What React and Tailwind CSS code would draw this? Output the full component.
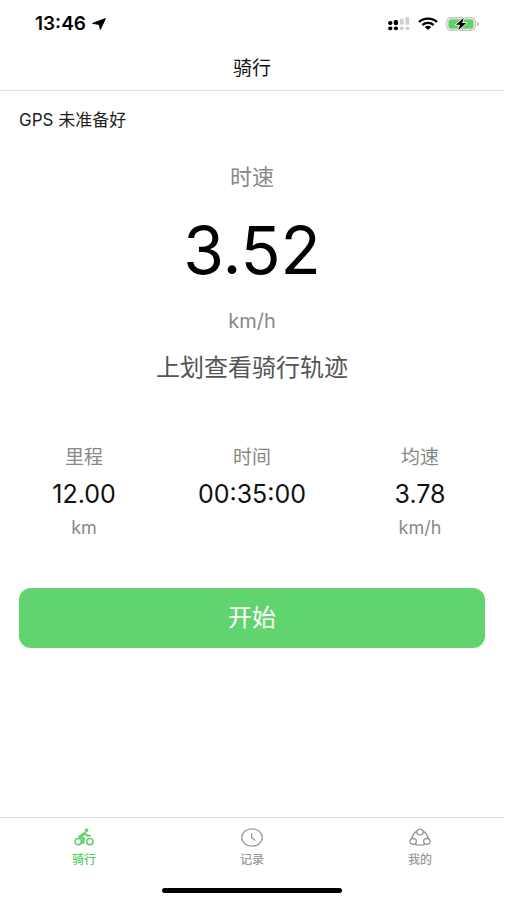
import React, { useState } from 'react';

const StatusBar = () => (
  <div className="flex h-12 items-center justify-between pl-[35px] pr-[25px]">
    <div className="flex items-center gap-[6px] text-[19px] font-semibold text-black">
      <span>13:46</span>
      <svg width="14" height="12" viewBox="0 0 14 12" aria-hidden="true">
        <path d="M13.4 0.6 L8.4 11.4 L7.2 6.4 L0.6 5.4 Z" fill="#000" stroke="#000" strokeWidth="1" strokeLinejoin="round" />
      </svg>
    </div>

    <div className="flex items-center gap-2">
      {/* Dual SIM signal */}
      <svg width="22" height="14" viewBox="0 0 22 14" aria-hidden="true">
        <g fill="#000">
          <rect x="0.2" y="4" width="4.2" height="4" rx="1.8" />
          <rect x="5.8" y="3" width="4.2" height="5" rx="1.6" />
          <rect x="0.2" y="9.4" width="4.2" height="3.8" rx="1.8" />
          <rect x="5.8" y="9.4" width="4.2" height="3.8" rx="1.8" />
        </g>
        <g fill="#cfcfcf">
          <rect x="11.8" y="1.8" width="3.8" height="6" rx="1.2" />
          <rect x="17.4" y="0" width="3.8" height="7.8" rx="1.2" />
          <rect x="11.8" y="9.6" width="3.8" height="3.4" rx="1.6" />
          <rect x="17.4" y="9.6" width="3.8" height="3.4" rx="1.6" />
        </g>
      </svg>
      {/* Wi-Fi */}
      <svg width="20" height="14" viewBox="0 0 20 14" aria-hidden="true">
        <g fill="none" stroke="#000" strokeWidth="2.3">
          <path d="M1 5 C5.8 0.4 14.2 0.4 19 5" />
          <path d="M4.4 8.1 C7.5 5.2 12.5 5.2 15.6 8.1" />
        </g>
        <path d="M6.7 10.1 C8.6 8.4 11.4 8.4 13.3 10.1 L10.8 12.3 Q10 13 9.2 12.3 Z" fill="#000" />
      </svg>
      {/* Battery, charging */}
      <svg width="33" height="14" viewBox="0 0 33 14" aria-hidden="true">
        <rect x="0.7" y="0.7" width="28.6" height="12.6" rx="4" fill="#fff" stroke="#c4c4c4" strokeWidth="1.4" />
        <rect x="2.4" y="2.2" width="25.2" height="9.6" rx="2.2" fill="#62d168" />
        <path d="M30.8 4.8 Q32.8 5.4 32.8 7 Q32.8 8.6 30.8 9.2 Z" fill="#b8b8b8" />
        <path d="M17.8 0.8 L9.8 7.8 H14 L12.2 13.2 L20.4 6 H16.1 Z" fill="#000" stroke="#fff" strokeWidth="1.6" strokeLinejoin="round" paintOrder="stroke" />
      </svg>
    </div>
  </div>
);

const RideIcon = () => (
  <svg width="20" height="18" viewBox="0 0 20 18" fill="none" stroke="currentColor" aria-hidden="true">
    <circle cx="4.2" cy="13.6" r="3.2" strokeWidth="1.5" />
    <circle cx="15.8" cy="13.6" r="3.2" strokeWidth="1.5" />
    <circle cx="12.6" cy="2.2" r="1.8" fill="currentColor" stroke="none" />
    <path d="M11.2 3.4 L3.8 8.8 L8.4 11 L7.8 15.6 L10 15.8 L11 10 L8.4 8.8 L11.2 6.4 L12.4 8.2 L16.4 8.4 L16.4 7 L13.2 6.8 Z" fill="currentColor" strokeWidth="0.4" strokeLinejoin="round" />
  </svg>
);

const HistoryIcon = () => (
  <svg width="22" height="19" viewBox="0 0 22 19" fill="none" stroke="currentColor" aria-hidden="true">
    <ellipse cx="11" cy="9.5" rx="10.2" ry="8.7" strokeWidth="1.3" />
    <path d="M10.6 5 V9.6 L14.4 12.4" strokeWidth="1.3" />
  </svg>
);

const ProfileIcon = () => (
  <svg width="22" height="18" viewBox="0 0 22 18" fill="none" stroke="currentColor" strokeWidth="1.3" aria-hidden="true">
    <ellipse cx="11" cy="4" rx="3.2" ry="2.9" />
    <ellipse cx="4.2" cy="13.4" rx="3.2" ry="2.9" />
    <ellipse cx="17.8" cy="13.4" rx="3.2" ry="2.9" />
    <path d="M8 2.8 C5.4 4.6 3.6 7 2.4 10.8" />
    <path d="M14 2.8 C16.6 4.6 18.4 7 19.6 10.8" />
    <path d="M5 16.2 C8.6 17.4 13.4 17.4 17 16.2" />
  </svg>
);

const stats = [
  { label: '里程', value: '12.00', unit: 'km' },
  { label: '时间', value: '00:35:00', unit: '' },
  { label: '均速', value: '3.78', unit: 'km/h' },
];

const tabs = [
  { id: 'ride', label: '骑行', icon: RideIcon },
  { id: 'history', label: '记录', icon: HistoryIcon },
  { id: 'profile', label: '我的', icon: ProfileIcon },
];

const App = () => {
  const [activeTab, setActiveTab] = useState('ride');

  return (
    <div className="flex min-h-screen flex-col bg-white pr-[3px] font-['Inter','Noto_Sans_CJK_SC',sans-serif]">
      <header className="border-b border-[#dedede]">
        <StatusBar />
        <h1 className="h-[42px] pt-[9px] text-center text-[19px] leading-6 text-[#111]">骑行</h1>
      </header>

      <main className="flex flex-1 flex-col px-[19px] pt-[17px]">
        <p className="text-[17px] leading-6 text-[#222]">GPS 未准备好</p>

        <section className="flex flex-col items-center">
          <h2 className="mt-[31px] text-[22px] leading-7 text-[#888]">时速</h2>
          <p className="mt-[23px] text-[66px] leading-[72px] text-black">3.52</p>
          <p className="mt-[21px] text-xl leading-7 text-[#888]">km/h</p>
          <p className="mt-[17px] text-2xl leading-8 text-[#555]">上划查看骑行轨迹</p>
        </section>

        <dl className="-mx-[19px] mt-[62px] grid grid-cols-3 text-center">
          {stats.map((stat) => (
            <div key={stat.label}>
              <dt className="text-[19px] leading-6 text-[#888]">{stat.label}</dt>
              <dd className="mt-2 text-[25px] leading-8 text-[#111]">{stat.value}</dd>
              <dd className="mt-[6px] h-6 text-lg leading-6 text-[#888]">{stat.unit}</dd>
            </div>
          ))}
        </dl>

        <button
          type="button"
          className="mt-12 h-[60px] w-full rounded-xl bg-[#62d46f] text-2xl text-white"
        >
          开始
        </button>
      </main>

      <footer className="border-t border-[#dedede]">
        <nav className="grid grid-cols-3 pt-[7px]">
          {tabs.map(({ id, label, icon: Icon }) => (
            <button
              key={id}
              type="button"
              onClick={() => setActiveTab(id)}
              className={`flex flex-col items-center ${activeTab === id ? 'text-[#5dd068]' : 'text-[#999]'}`}
            >
              <span className="flex h-6 items-center">
                <Icon />
              </span>
              <span className="mt-[3px] text-xs leading-4 font-medium">{label}</span>
            </button>
          ))}
        </nav>
        <div className="mx-auto mt-5 mb-[7px] h-[5px] w-[180px] rounded-full bg-black"></div>
      </footer>
    </div>
  );
};

export default App;
